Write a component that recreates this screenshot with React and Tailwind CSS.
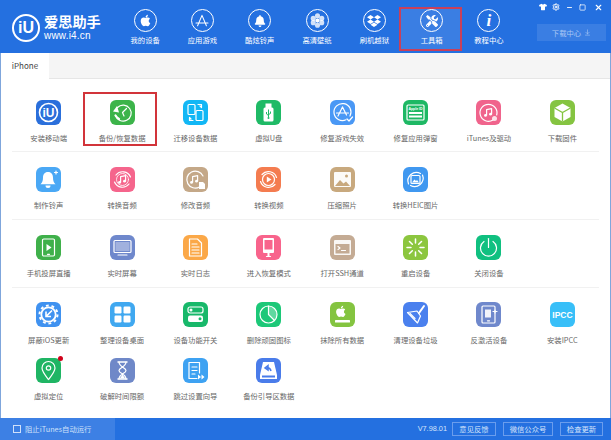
import { FaApple, FaBell, FaDropbox, FaTools, FaTshirt } from 'react-icons/fa';
import { Minus, Square, X, Settings, ArrowDownToLine } from 'lucide-react';

const S = { fill: 'none', stroke: 'white', strokeWidth: 1.2, strokeLinecap: 'round', strokeLinejoin: 'round' };

const Ic = ({ children }) => (
  <svg viewBox="0 0 25 25" className="w-[25px] h-[25px]">{children}</svg>
);

const Note = ({ x = 0, y = 0 }) => (
  <g transform={`translate(${x} ${y})`}>
    <path d="M10.6 15.2V9.6l5-1v5.4" {...S} />
    <circle cx="9.5" cy="15.4" r="1.4" fill="white" />
    <circle cx="14.5" cy="14.2" r="1.4" fill="white" />
  </g>
);

const icons = {
  iu: (
    <Ic>
      <circle cx="12.5" cy="12.5" r="9" {...S} strokeWidth="1.6" />
      <text x="12.5" y="17" textAnchor="middle" fontSize="12" fontWeight="700" fill="white" fontFamily="Liberation Sans, sans-serif">iU</text>
    </Ic>
  ),
  backup: (
    <Ic>
      <path d="M7.5 7.500a8 8 0 1 1-2 8" {...S} />
      <path d="M3 11.500l4-5.500 2 6.500z" fill="white" />
      <path d="M5.500 15.500c1 1.500 2 2.500 3.500 3.500" {...S} strokeWidth="2.200" />
      <path d="M12.500 12.500l4-4M12.500 12.500l1.500 3.500" {...S} />
    </Ic>
  ),
  transfer: (
    <Ic>
      <rect x="5" y="4.500" width="7" height="10" rx="1" {...S} />
      <rect x="13" y="10.500" width="7" height="10" rx="1" {...S} />
      <path d="M15 4.500h3.500v3M18.500 7.500l-1.500-1.500M10 20.500H6.500v-3M6.500 17.500l1.500 1.500" {...S} />
    </Ic>
  ),
  usb: (
    <Ic>
      <rect x="9.500" y="3.500" width="6" height="4.500" fill="white" />
      <rect x="7.500" y="7.500" width="10" height="14" rx="1.500" fill="white" />
      <path d="M12.500 9.500v8M10.500 12v2l2 1.500M14.500 11.500v2l-2 1" fill="none" stroke="#1fba66" strokeWidth="1" />
      <circle cx="12.500" cy="18" r="1" fill="#1fba66" />
    </Ic>
  ),
  repairApp: (
    <Ic>
      <path d="M20 16a8.500 8.500 0 1 0-4 3.800" {...S} />
      <path d="M12.500 7L8 16M12.500 7l4 8M6.500 13h12" {...S} />
      <path d="M17 19l2 2 3.500-4" {...S} />
    </Ic>
  ),
  appleId: (
    <Ic>
      <rect x="4" y="5" width="17" height="15" rx="1" {...S} />
      <text x="12.500" y="10" textAnchor="middle" fontSize="3.500" fontWeight="700" fill="white" fontFamily="Liberation Sans, sans-serif">Apple ID</text>
      <rect x="6" y="12" width="13" height="2" fill="white" />
      <rect x="6" y="15.500" width="13" height="2" fill="white" />
    </Ic>
  ),
  itunes: (
    <Ic>
      <path d="M17 20a8.500 8.500 0 1 1 3.700-5" {...S} />
      <Note />
      <circle cx="18.500" cy="18.500" r="2.500" fill="white" opacity=".8" />
    </Ic>
  ),
  cube: (
    <Ic>
      <path d="M12.500 3.500l8 4.500v9l-8 4.500-8-4.500V8z" fill="white" />
      <path d="M4.500 8l8 4.500 8-4.500M12.500 12.500v9" fill="none" stroke="#85c441" strokeWidth="1.300" />
    </Ic>
  ),
  bell: (
    <Ic>
      <path d="M12 5c-3.500 0-5 2.500-5 5.500 0 3.500-.8 5-2.500 6.800h15c-1.700-1.800-2.500-3.300-2.500-6.800C17 7.500 15.500 5 12 5z" fill="white" />
      <path d="M9.500 18.500a2.500 2.500 0 0 0 5 0z" fill="white" />
      <path d="M20 4v3M18.500 5.500h3" {...S} />
    </Ic>
  ),
  ringNote: (
    <Ic>
      <path d="M6 8a8.500 8.500 0 0 1 14.500 2M19 17a8.500 8.500 0 0 1-14.500-2" {...S} />
      <circle cx="12.500" cy="12.500" r="6" {...S} strokeWidth=".8" />
      <Note />
    </Ic>
  ),
  editAudio: (
    <Ic>
      <path d="M20 9a8.500 8.500 0 1 0-3.500 11" {...S} />
      <Note x="-1" />
      <path d="M16 15h4l2 2v5h-6z" fill="white" />
    </Ic>
  ),
  video: (
    <Ic>
      <path d="M6 7.500a8.500 8.500 0 0 1 14.500 3M19 17.500a8.500 8.500 0 0 1-14.500-3" {...S} />
      <circle cx="12.500" cy="12.500" r="6" {...S} />
      <path d="M10.800 9.500l4.700 3-4.700 3z" fill="white" />
    </Ic>
  ),
  photo: (
    <Ic>
      <rect x="4" y="5" width="17" height="15" rx="1" fill="white" opacity=".95" />
      <path d="M5 19l5-6 3.500 3.500 2.500-2 4 4.500z" fill="#c8a97e" />
      <circle cx="16.500" cy="9" r="1.500" fill="#c8a97e" />
    </Ic>
  ),
  heic: (
    <Ic>
      <path d="M5.500 17a8.500 8.500 0 0 1 12-10.500M19.500 8a8.500 8.500 0 0 1-12 10.500" {...S} />
      <rect x="8" y="8.500" width="9" height="8" rx="1" {...S} />
      <path d="M9 15.500l2.500-3 1.500 1.500 1-1 2 2.500z" fill="white" />
    </Ic>
  ),
  cast: (
    <Ic>
      <rect x="6.500" y="4" width="12" height="17" rx="1.200" {...S} />
      <path d="M10.500 9l5 3.500-5 3.500z" fill="white" />
      <path d="M11.500 19.300h2" {...S} />
    </Ic>
  ),
  monitor: (
    <Ic>
      <rect x="4" y="5.500" width="17" height="12" rx="1" {...S} />
      <rect x="5.500" y="7" width="14" height="9" fill="white" opacity=".35" />
      <path d="M8 20h9" {...S} />
    </Ic>
  ),
  log: (
    <Ic>
      <path d="M6.500 4h8l4 4v13h-12z" {...S} />
      <path d="M9 9h5M9 12h7M9 15h7M9 18h7" {...S} />
    </Ic>
  ),
  recovery: (
    <Ic>
      <rect x="7" y="3" width="11" height="15" rx="1" fill="white" />
      <rect x="8.500" y="5" width="8" height="9.500" fill="#f8648c" />
      <path d="M12.500 18v3" {...S} strokeWidth="2" />
      <path d="M10.500 21.500h4" {...S} />
    </Ic>
  ),
  ssh: (
    <Ic>
      <rect x="4" y="5" width="17" height="15" rx="1" fill="white" opacity=".9" />
      <rect x="5.500" y="9" width="14" height="9.500" fill="#c4ab94" />
      <path d="M8 11.500l2 1.500-2 1.500M11.500 15.500h4" {...S} />
    </Ic>
  ),
  restart: (
    <Ic>
      <path d="M12.500 4v4M12.500 17v4M4 12.500h4M17 12.500h4M6.500 6.500l2.800 2.800M15.700 15.700l2.800 2.800M18.500 6.500l-2.800 2.800M9.300 15.700l-2.800 2.800" {...S} strokeWidth="1.500" />
    </Ic>
  ),
  power: (
    <Ic>
      <path d="M8 6.500a8 8 0 1 0 9 0" {...S} />
      <path d="M12.500 3.500v9" {...S} />
    </Ic>
  ),
  update: (
    <Ic>
      <circle cx="12.500" cy="12.500" r="7.200" fill="none" stroke="white" strokeWidth="1.800" />
      <circle cx="12.500" cy="12.500" r="9" fill="none" stroke="white" strokeWidth="2" strokeDasharray="2.800 2.850" />
      <path d="M16 8.500l-5.500 5.500M10 9.500V14.500h5" fill="none" stroke="white" strokeWidth="1.600" />
    </Ic>
  ),
  grid: (
    <Ic>
      <rect x="4.500" y="4.500" width="7" height="7" rx="1.200" fill="white" />
      <rect x="13.500" y="4.500" width="7" height="7" rx="1.200" fill="white" />
      <rect x="4.500" y="13.500" width="7" height="7" rx="1.200" fill="white" />
      <rect x="13.500" y="13.500" width="7" height="7" rx="1.200" fill="white" />
    </Ic>
  ),
  toggles: (
    <Ic>
      <rect x="5" y="5" width="15" height="6" rx="2" {...S} />
      <circle cx="8" cy="8" r="1.500" fill="white" />
      <rect x="5" y="13.500" width="15" height="6.500" rx="2" fill="white" />
      <circle cx="17" cy="16.700" r="1.500" fill="#18b86a" />
    </Ic>
  ),
  pie: (
    <Ic>
      <circle cx="12.500" cy="12.500" r="8.500" {...S} />
      <path d="M12.500 4v8.500l6 6A8.500 8.500 0 0 0 12.500 4z" fill="white" opacity=".3" />
      <path d="M12.500 4v8.500l6 6" {...S} />
    </Ic>
  ),
  appleBar: (
    <Ic>
      <g transform="translate(6 3) scale(.025)"><path fill="white" d="M318.700 268.700c-.2-36.700 16.400-64.400 50-84.800-18.800-26.900-47.200-41.700-84.700-44.600-35.500-2.800-74.300 20.700-88.500 20.700-15 0-49.400-19.700-76.400-19.700C63.300 141.200 4 184.800 4 273.500q0 39.300 14.400 81.200c12.800 36.700 59 126.700 107.200 125.200 25.200-.6 43-17.900 75.800-17.900 31.800 0 48.300 17.900 76.400 17.900 48.600-.7 90.400-82.500 102.600-119.300-65.200-30.700-61.700-90-61.700-91.900zm-56.600-164.200c27.300-32.400 24.800-61.900 24-72.500-24.100 1.400-52 16.400-67.900 34.900-17.500 19.800-27.800 44.300-25.600 71.900 26.100 2 49.900-11.400 69.500-34.300z" /></g>
      <rect x="5" y="18" width="15" height="2.500" rx=".6" fill="white" />
    </Ic>
  ),
  broom: (
    <Ic>
      <path d="M4.500 10.500l9.500-1.500 3.500 5-3 7z" {...S} />
      <path d="M16 11l5-7" {...S} strokeWidth="2" />
      <path d="M7 11.500l5 5" {...S} />
    </Ic>
  ),
  deactivate: (
    <Ic>
      <rect x="6" y="4" width="13" height="17" rx="1" {...S} />
      <rect x="9" y="7.500" width="6" height="8" fill="white" opacity=".9" />
      <path d="M17 9.500h4M19 8v3" {...S} />
      <path d="M11.500 18.800h2" {...S} />
    </Ic>
  ),
  ipcc: (
    <Ic>
      <text x="12.500" y="15.500" textAnchor="middle" fontSize="8.500" fontWeight="700" fill="white" fontFamily="Liberation Sans, sans-serif">IPCC</text>
    </Ic>
  ),
  pin: (
    <Ic>
      <path d="M12.500 21.500c-4-5-6.500-8-6.500-11.500a6.500 6.500 0 0 1 13 0c0 3.500-2.500 6.500-6.500 11.500z" {...S} />
      <circle cx="12.500" cy="10" r="2.200" {...S} />
    </Ic>
  ),
  hourglass: (
    <Ic>
      <path d="M8 4h9M8 21h9" {...S} strokeWidth="1.500" />
      <path d="M9 4c0 5 7 5.500 7 8.500S9 16 9 21M16 4c0 5-7 5.500-7 8.500S16 16 16 21" {...S} />
      <path d="M9.800 20.500l2.700-4 2.700 4z" fill="white" />
    </Ic>
  ),
  skip: (
    <Ic>
      <path d="M16.500 15V4.500H6v16h8" {...S} />
      <path d="M9 9h5M9 12.500h5M9 16h3" {...S} />
      <path d="M15 16.500l3 2.500-3 2.500zM18.500 16.500l3 2.500-3 2.500z" fill="white" />
    </Ic>
  ),
  disk: (
    <Ic>
      <path d="M7 4h11l3 13v4H4v-4z" fill="white" />
      <rect x="6" y="17.500" width="13" height="2" fill="#4a7cea" />
      <path d="M15 13c-.5-2.500-2.500-3.500-4.500-3.200M12 7.500l-3 2.500 3 2z" fill="none" stroke="#4a7cea" strokeWidth="1.500" />
    </Ic>
  ),
};

const rows = [
  {
    cls: 'h-[73px] pt-[21px] border-b border-[#f1f1f1]',
    items: [
      ['安装移动端', 'bg-[#2a6fdb]', 'iu'],
      ['备份/恢复数据', 'bg-[#3cb44a]', 'backup', 'boxed'],
      ['迁移设备数据', 'bg-[#12b7f5]', 'transfer'],
      ['虚拟U盘', 'bg-[#1fba66]', 'usb'],
      ['修复游戏失效', 'bg-[#4a98f5]', 'repairApp'],
      ['修复应用弹窗', 'bg-[#1eb864]', 'appleId'],
      ['iTunes及驱动', 'bg-[#f0648c]', 'itunes'],
      ['下载固件', 'bg-[#85c441]', 'cube'],
    ],
  },
  {
    cls: 'h-[68px] pt-[15px] border-b border-[#f1f1f1]',
    items: [
      ['制作铃声', 'bg-[#4aa8f5]', 'bell'],
      ['转换音频', 'bg-[#f5658c]', 'ringNote'],
      ['修改音频', 'bg-[#c4a888]', 'editAudio'],
      ['转换视频', 'bg-[#f47c50]', 'video'],
      ['压缩照片', 'bg-[#c8a97e]', 'photo'],
      ['转换HEIC图片', 'bg-[#4098f0]', 'heic'],
    ],
  },
  {
    cls: 'h-[68px] pt-[15px] border-b border-[#f1f1f1]',
    items: [
      ['手机投屏直播', 'bg-[#3fb04a]', 'cast'],
      ['实时屏幕', 'bg-[#6f88cc]', 'monitor'],
      ['实时日志', 'bg-[#fba848]', 'log'],
      ['进入恢复模式', 'bg-[#f8648c]', 'recovery'],
      ['打开SSH通道', 'bg-[#c4ab94]', 'ssh'],
      ['重启设备', 'bg-[#8cc63f]', 'restart'],
      ['关闭设备', 'bg-[#10c080]', 'power'],
    ],
  },
  {
    cls: 'h-[56px] pt-[14px]',
    items: [
      ['屏蔽iOS更新', 'bg-[#4092f0]', 'update'],
      ['整理设备桌面', 'bg-[#40a8f0]', 'grid'],
      ['设备功能开关', 'bg-[#18b86a]', 'toggles'],
      ['删除顽固图标', 'bg-[#1cc878]', 'pie'],
      ['抹除所有数据', 'bg-[#84c440]', 'appleBar'],
      ['清理设备垃圾', 'bg-[#4a80ee]', 'broom'],
      ['反激活设备', 'bg-[#6f88cc]', 'deactivate'],
      ['安装IPCC', 'bg-[#38bff8]', 'ipcc'],
    ],
  },
  {
    cls: 'h-[73px] pt-[14px]',
    items: [
      ['虚拟定位', 'bg-[#1fb564]', 'pin', 'dot'],
      ['破解时间限额', 'bg-[#6f88c8]', 'hourglass'],
      ['跳过设置向导', 'bg-[#3ea2f2]', 'skip'],
      ['备份引导区数据', 'bg-[#4a7cea]', 'disk'],
    ],
  },
];

const nav = [
  ['我的设备', <FaApple className="w-[13px] h-[13px]" />],
  ['应用游戏', (
    <svg viewBox="0 0 20 20" className="w-[16px] h-[16px]" fill="none" stroke="white" strokeWidth="1.300" strokeLinecap="round">
      <path d="M10 3L4.500 16M10 3l5.500 13M2.500 12.500h15" />
    </svg>
  )],
  ['酷炫铃声', <FaBell className="w-[12px] h-[12px]" />],
  ['高清壁纸', (
    <svg viewBox="0 0 20 20" className="w-[17px] h-[17px]" fill="white">
      <circle cx="10" cy="4.500" r="3" opacity=".8" />
      <circle cx="10" cy="15.500" r="3" opacity=".8" />
      <circle cx="5" cy="7.500" r="3" opacity=".8" />
      <circle cx="15" cy="7.500" r="3" opacity=".8" />
      <circle cx="5" cy="12.500" r="3" opacity=".8" />
      <circle cx="15" cy="12.500" r="3" opacity=".8" />
      <circle cx="10" cy="10" r="2.500" />
    </svg>
  )],
  ['刷机越狱', <FaDropbox className="w-[14px] h-[14px]" />],
  ['工具箱', <FaTools className="w-[12px] h-[12px]" />, true],
  ['教程中心', <span className="font-['Liberation_Serif',serif] italic font-bold text-[17px] leading-none">i</span>],
];

function NavItem({ label, icon, active }) {
  return (
    <div className="relative w-[57.3px] flex flex-col items-center pt-[9px]">
      {active && (
        <div className="absolute left-[-4px] top-[7px] w-[63px] h-[44px] border-2 border-[#c9405a] bg-white/10" />
      )}
      <div className="relative w-[23px] h-[23px] rounded-full border-[1.5px] border-white flex items-center justify-center text-white">
        {icon}
      </div>
      <span className="relative mt-[3px] text-[7.33px] leading-[10px] text-white whitespace-nowrap">{label}</span>
    </div>
  );
}

function Tool({ label, color, icon, flag }) {
  return (
    <div className="relative flex flex-col items-center">
      {flag === 'boxed' && (
        <div className="absolute left-[-2px] top-[-8px] w-[74px] h-[54px] border-2 border-[#d2343a]" />
      )}
      <div className={`relative w-[25px] h-[25px] rounded-[6px] ${color}`}>
        {icons[icon]}
        {flag === 'dot' && (
          <span className="absolute right-[-2px] top-[-2px] w-[5px] h-[5px] rounded-full bg-[#d0021b]" />
        )}
      </div>
      <span className="relative mt-[8px] text-[7.33px] leading-[10px] text-[#666] whitespace-nowrap">{label}</span>
    </div>
  );
}

export default function App() {
  return (
    <div className="w-[611px] h-[440px] flex flex-col overflow-hidden bg-white font-['Noto_Sans_CJK_SC','Noto_Sans',sans-serif]">
      {/* Header */}
      <div className="h-[53px] shrink-0 flex bg-[#2470e0]">
        <div className="w-[116.500px] shrink-0 flex items-start pl-[12px] pt-[14px] gap-[4px]">
          <div className="w-[28px] h-[28px] rounded-full border-2 border-white flex items-center justify-center text-white text-[16px] font-bold leading-none font-['Liberation_Sans',sans-serif]">
            iU
          </div>
          <div className="flex flex-col text-white">
            <span className="h-[14px] text-[14.200px] leading-[14px] font-bold whitespace-nowrap">爱思助手</span>
            <span className="mt-[3px] h-[9px] text-[10px] leading-[9px] font-['Liberation_Sans',sans-serif] tracking-[0.2px]">www.i4.cn</span>
          </div>
        </div>
        <div className="flex">
          {nav.map(([label, icon, active]) => (
            <NavItem key={label} label={label} icon={icon} active={active} />
          ))}
        </div>
        <div className="flex-1 flex flex-col items-end pr-[5px]">
          <div className="h-[12px] mt-[1px] flex items-center gap-[5px] text-white pr-[3px]">
            <FaTshirt className="w-[8px] h-[8px]" />
            <Settings className="w-[8px] h-[8px]" strokeWidth={3} />
            <Minus className="w-[7px] h-[7px] ml-[1px]" strokeWidth={3} />
            <Square className="w-[7px] h-[7px] ml-[1px]" strokeWidth={2.500} />
            <X className="w-[9px] h-[9px] ml-[3px]" strokeWidth={3} />
          </div>
          <div className="mt-[11px] w-[69px] h-[17px] bg-white/10 flex items-center justify-center gap-[3px] text-[#a9c8f5]">
            <span className="text-[7.33px] leading-[10px] whitespace-nowrap">下载中心</span>
            <ArrowDownToLine className="w-[7px] h-[7px]" />
          </div>
        </div>
      </div>

      {/* Body */}
      <div className="flex-1 flex flex-col border-x border-[#7fa6dc]">
        <div className="h-[26px] shrink-0 flex bg-[#f5f5f5] border-b border-[#e6e6e6]">
          <div className="w-[48px] h-[26px] bg-white flex items-center justify-center text-[8px] text-[#444]">iPhone</div>
        </div>
        <div className="px-[11px]">
          {rows.map((row, i) => (
            <div key={i} className={`grid grid-cols-8 ${row.cls}`}>
              {row.items.map(([label, color, icon, flag]) => (
                <Tool key={label} label={label} color={color} icon={icon} flag={flag} />
              ))}
            </div>
          ))}
        </div>
      </div>

      {/* Footer */}
      <div className="h-[22px] shrink-0 flex items-center bg-[#2470e0]">
        <div className="w-[115px] h-full bg-[#3d80e4] flex items-center pl-[13px] gap-[4px] text-[#cfe0fa]">
          <div className="w-[8px] h-[8px] border border-[#cfe0fa]" />
          <span className="text-[7.33px] leading-[10px] whitespace-nowrap">阻止iTunes自动运行</span>
        </div>
        <div className="flex-1 flex items-center justify-end pr-[8px] text-[#d5e4fb] text-[7.33px] leading-[10px]">
          <span className="mr-[5px] font-['Liberation_Sans',sans-serif]">V7.98.01</span>
          <div className="w-[44px] h-[14px] mr-[7px] border border-[#6a9ded] flex items-center justify-center">意见反馈</div>
          <div className="w-[50px] h-[14px] mr-[7px] border border-[#6a9ded] flex items-center justify-center">微信公众号</div>
          <div className="w-[43px] h-[14px] border border-[#6a9ded] flex items-center justify-center">检查更新</div>
        </div>
      </div>
    </div>
  );
}
